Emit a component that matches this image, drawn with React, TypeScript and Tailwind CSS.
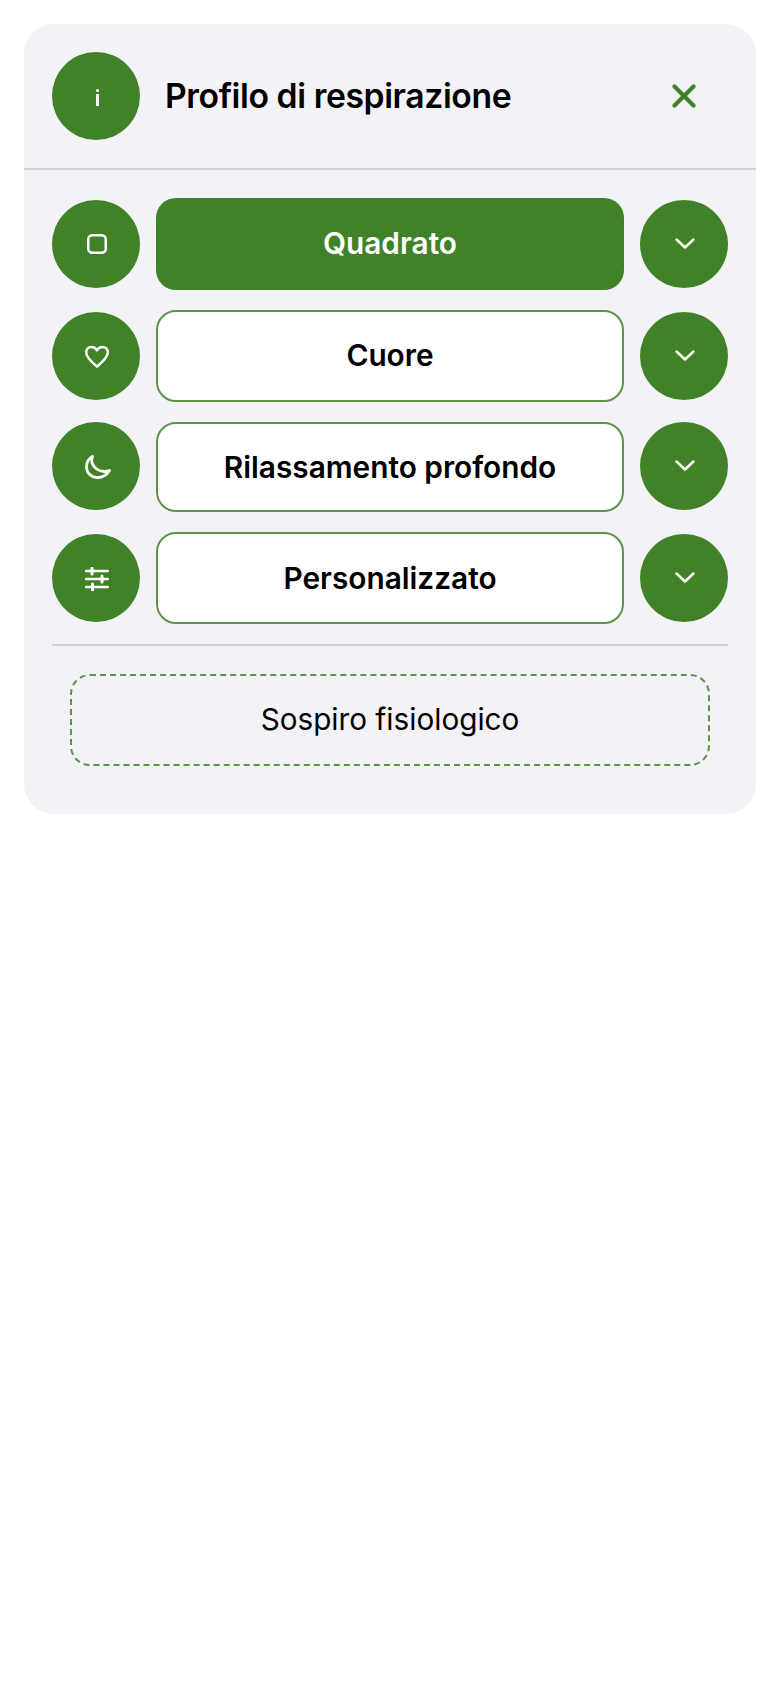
import type { ReactNode } from "react";

function SquareIcon() {
  return (
    <svg width="20" height="20" viewBox="0 0 20 20" fill="none" stroke="currentColor" strokeWidth="2.5" className="ml-[2px] mb-[1px]">
      <rect x="1.25" y="1.25" width="17.5" height="17.5" rx="4" />
    </svg>
  );
}

function HeartIcon() {
  return (
    <svg width="26" height="23" viewBox="0 0 26 23" fill="none" stroke="currentColor" strokeWidth="2.5" strokeLinejoin="round" className="ml-[2px] mt-[1px]">
      <path d="M13 21.5 C9 18 2.25 13 2.25 7.5 C2.25 4 4.5 2 7.5 2 C9.8 2 11.8 3.2 13 5.5 C14.2 3.2 16.2 2 18.5 2 C21.5 2 23.75 4 23.75 7.5 C23.75 13 17 18 13 21.5 Z" />
    </svg>
  );
}

function MoonIcon() {
  return (
    <svg width="26" height="24" viewBox="0 0 26 24" fill="none" stroke="currentColor" strokeWidth="2.8" strokeLinejoin="round" className="ml-[4px] mt-[2px]">
      <path d="M7.5 1.5 C3.5 3.5 1.5 7.5 1.5 12 C1.5 18 6.5 22.5 12.5 22.5 C18 22.5 22 19.5 24.5 15.5 C23 16.5 21 16.5 19 16.5 C13 16.5 8.5 12 7 8 C6.5 6 6.8 3.5 7.5 1.5 Z" />
    </svg>
  );
}

function SlidersIcon() {
  return (
    <svg width="24" height="24" viewBox="0 0 24 24" fill="none" stroke="currentColor" strokeLinecap="round" className="ml-[2px] mt-[1px]">
      <path d="M1 4h22M1 12h22M1 20h22" strokeWidth="2.5" />
      <path d="M7 1v6M17 9v6M7.5 17v6" strokeWidth="3" />
    </svg>
  );
}

function ChevronIcon() {
  return (
    <svg width="22" height="13" viewBox="0 0 22 13" fill="none" stroke="currentColor" strokeWidth="2.5" strokeLinecap="round" strokeLinejoin="round" className="ml-[2px] mb-[2px]">
      <path d="M2.5 2.5l8.5 8 8.5-8" />
    </svg>
  );
}

function CloseIcon() {
  return (
    <svg width="24" height="24" viewBox="0 0 24 24" fill="none" stroke="currentColor" strokeWidth="4.2" strokeLinecap="round">
      <path d="M2.5 2.5l19 19M21.5 2.5L2.5 21.5" />
    </svg>
  );
}

const rows = [
  { label: "Quadrato", icon: <SquareIcon />, active: true, row: "h-[92px]", mt: "", text: "pb-[2px]", align: "" },
  { label: "Cuore", icon: <HeartIcon />, active: false, row: "h-[92px]", mt: "mt-5", text: "pb-[2px]", align: "" },
  { label: "Rilassamento profondo", icon: <MoonIcon />, active: false, row: "h-[90px]", mt: "mt-5", text: "", align: "self-start" },
  { label: "Personalizzato", icon: <SlidersIcon />, active: false, row: "h-[92px]", mt: "mt-5", text: "", align: "" },
];

function Circle({ children }: { children: ReactNode }) {
  return (
    <div className="w-[88px] h-[88px] shrink-0 rounded-full bg-[#418127] text-white flex items-center justify-center">
      {children}
    </div>
  );
}

export default function App() {
  return (
    <div className="min-h-screen bg-white pt-6 px-6 font-['Inter',sans-serif] text-black">
      <div className="bg-[#f2f2f7] rounded-[30px] h-[790px]">
        <div className="h-[146px] border-b-2 border-[#d1d1d6] px-7 pt-7 flex items-start">
          <Circle>
            <div className="flex flex-col items-center gap-[2px] mt-[3px] ml-[2px]">
              <span className="w-[3px] h-[3px] rounded-full bg-white" />
              <span className="w-[3px] h-[12px] bg-white" />
            </div>
          </Circle>
          <h1 className="ml-[25px] h-[88px] flex items-center text-[33.7px] font-semibold tracking-[-0.4px]">
            Profilo di respirazione
          </h1>
          <button className="ml-auto w-[88px] h-[88px] flex items-center justify-center text-[#418127]">
            <CloseIcon />
          </button>
        </div>
        <div className="px-7 pt-7">
          {rows.map((r) => (
            <div key={r.label} className={`flex items-center ${r.row} ${r.mt}`}>
              <div className={r.align}>
                <Circle>{r.icon}</Circle>
              </div>
              <button
                className={
                  r.active
                    ? `ml-4 flex-1 h-full rounded-[20px] bg-[#418127] text-white text-[29.8px] font-semibold ${r.text}`
                    : `ml-4 flex-1 h-full rounded-[20px] bg-white border-2 border-[#5c9448] text-black text-[29.8px] font-semibold ${r.text}`
                }
              >
                {r.label}
              </button>
              <div className={`ml-4 ${r.align}`}>
                <Circle>
                  <ChevronIcon />
                </Circle>
              </div>
            </div>
          ))}
          <div className="h-0.5 bg-[#d1d1d6] mt-5" />
          <button className="block mx-[18px] mt-7 w-[640px] h-[92px] pb-[2px] rounded-[20px] border-2 border-dashed border-[#5c9448] text-[29.7px] font-normal">
            Sospiro fisiologico
          </button>
        </div>
      </div>
    </div>
  );
}
